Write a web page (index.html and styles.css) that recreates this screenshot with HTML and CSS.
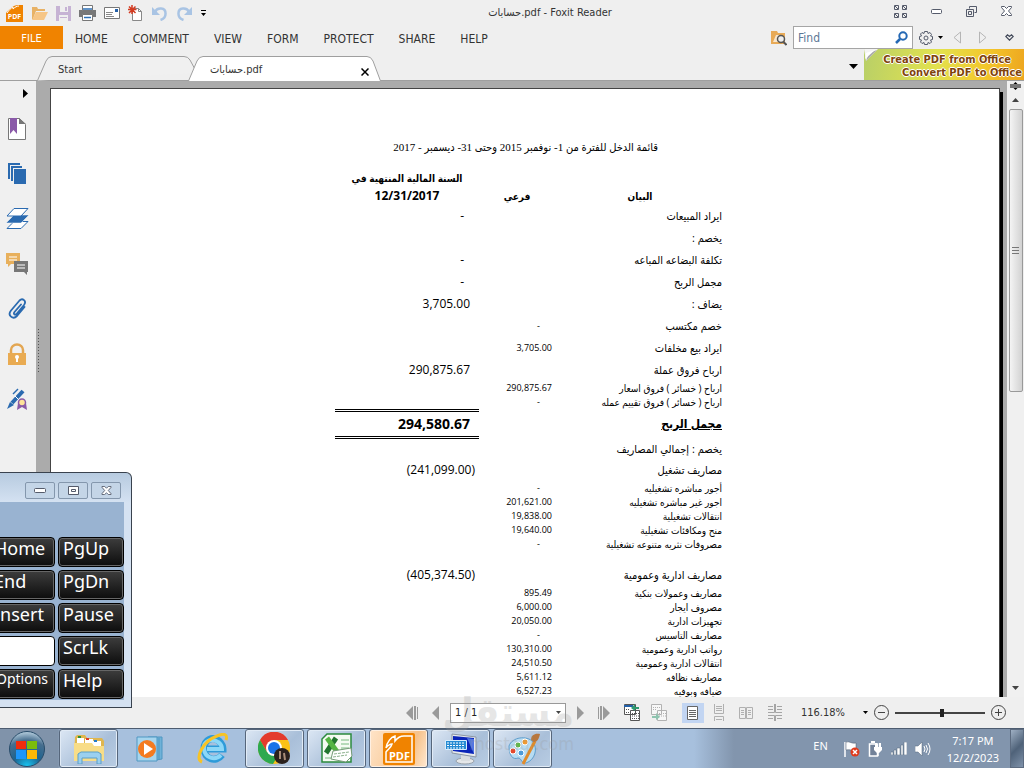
FILE: index.html
```html
<!DOCTYPE html>
<html lang="en">
<head>
<meta charset="utf-8">
<title>حسابات.pdf - Foxit Reader</title>
<link rel="stylesheet" href="styles.css">
</head>
<body>
<svg class="defs" aria-hidden="true">
  <defs>
    <symbol id="foxit" viewBox="0 0 32 32">
      <path fill="#f08300" d="M2 0H30a2 2 0 0 1 2 2V30a2 2 0 0 1-2 2H2a2 2 0 0 1-2-2V2a2 2 0 0 1 2-2z"/>
      <path fill="none" stroke="#fff" stroke-width="1.500" d="M3 15C4 9 8 4 12 3V8C15 4 18 3 21 3H29V29H3V19C5 16 8 15 9 11C7 11 4 13 3 15"/>
      <text x="16.500" y="27" text-anchor="middle" font-size="11" font-weight="700" fill="#fff">PDF</text>
    </symbol>
    <symbol id="diag" viewBox="0 0 5 5">
      <path fill="none" stroke="#555b6b" d="M.5.5h4v4h-4zM1 1l3 3"/>
    </symbol>
  </defs>
</svg>

<header class="titlebar">
  <div class="quick">
    <svg width="17" height="17" viewBox="0 0 17 17"><path fill="#f08300" d="M5 3C7 1 10 0 12 0H17V17H0V8C1 6 3 5 5 3z"/><path stroke="#fff" fill="none" d="M1 8C3 5 5 3 7 2V4C9 2 11 1 13 1"/><text x="8.5" y="14" text-anchor="middle" font-size="7" font-weight="700" fill="#fff">PDF</text></svg>
    <svg width="17" height="16" viewBox="0 0 17 16"><path fill="#e8b266" d="M1 14V2h5l1 2h7v2H5L2 14z"/><path fill="#f6c687" d="M5 7h12l-4 8H1z"/></svg>
    <svg width="15" height="15" viewBox="0 0 15 15"><path fill="#c6b3d4" d="M0 0h15v15H0z"/><path fill="#efefef" d="M4 0h8v6H4zM3 9h9v6H3z"/><path fill="#c6b3d4" d="M9 1h2v4H9zM4 11h7v1H4z"/></svg>
    <svg width="17" height="16" viewBox="0 0 17 16"><path fill="#777" d="M0 5h17v7H0z"/><path fill="#fff" stroke="#777" d="M3.5.5h10v5h-10zM3.500 9.500h10v6h-10z"/><path stroke="#2c6fb5" stroke-width="1.500" d="M4 4h9M5 12.500h7"/></svg>
    <svg width="16" height="12" viewBox="0 0 16 12"><path fill="#fff" stroke="#777" d="M.5.5h15v11H.5z"/><path stroke="#888" d="M2 5.500h7M2 7.500h6M2 9.500h8"/><path fill="#2460a8" d="M11 2h3v3h-3z"/></svg>
    <svg width="15" height="16" viewBox="0 0 15 16"><path fill="#fff" stroke="#888" d="M4.500 3.500h6l3 3v9h-9z"/><path fill="none" stroke="#888" d="M10.500 3.500v3h3"/><path stroke="#d33a20" stroke-width="1.500" d="M4 0v9M0 4.500h8.500M1 1.500l6.500 6.500M7.500 1.500L1 8"/></svg>
    <svg width="17" height="15" viewBox="0 0 17 15"><path fill="none" stroke="#a9c4e4" stroke-width="2.500" d="M4 6C6 1 15 1 14.500 8c0 3-2 5-5 6"/><path fill="#a9c4e4" d="M1 1v8h8z"/></svg>
    <svg width="17" height="15" viewBox="0 0 17 15"><path fill="none" stroke="#a9c4e4" stroke-width="2.500" d="M13 6C11 1 2 1 2.500 8c0 3 2 5 5 6"/><path fill="#a9c4e4" d="M16 1v8H8z"/></svg>
    <svg width="5" height="7" viewBox="0 0 5 7"><path d="M0 0h5v1H0zM0 3h5L2.500 6z"/></svg>
  </div>
  <h1 class="title">حسابات.pdf - Foxit Reader</h1>
  <div class="winbtns">
    <button aria-label="Full screen"><svg width="13" height="13" viewBox="0 0 13 13"><use href="#diag" width="5" height="5"/><use href="#diag" x="8" width="5" height="5"/><use href="#diag" y="8" width="5" height="5"/><use href="#diag" x="8" y="8" width="5" height="5"/></svg></button>
    <button aria-label="Minimize"><svg width="11" height="5" viewBox="0 0 11 5"><rect x=".5" y=".5" width="10" height="4" rx="1" fill="#fff" stroke="#555b6b"/></svg></button>
    <button aria-label="Restore"><svg width="11" height="11" viewBox="0 0 11 11"><path fill="none" stroke="#555b6b" d="M3.500 2.500v-2h7v6h-2M.5 3.500h7v7h-7zM2.500 5.500h3v3h-3z"/></svg></button>
    <button aria-label="Close"><svg width="11" height="10" viewBox="0 0 11 10"><path fill="#fff" stroke="#555b6b" d="M.5.5h3l2 2 2-2h3v1L7.500 5l3 3.500v1h-3l-2-2-2 2h-3v-1l3-3.500-3-3.500z"/></svg></button>
  </div>
</header>

<div class="menurow">
  <nav class="menu">
    <a href="#" class="file">FILE</a>
    <a href="#">HOME</a><a href="#">COMMENT</a><a href="#">VIEW</a><a href="#">FORM</a><a href="#">PROTECT</a><a href="#">SHARE</a><a href="#">HELP</a>
  </nav>
  <div class="tools">
    <svg width="16" height="16" viewBox="0 0 16 16"><path fill="#e8aa57" d="M0 1h6l1 2h7v11H0z"/><path fill="#fff" opacity=".7" d="M2 12l3-7h4v7z"/><circle cx="10" cy="9" r="3.500" fill="#eee" stroke="#555" stroke-width="1.500"/><path stroke="#555" stroke-width="2" d="M12.500 12l3 3"/></svg>
    <label class="find"><input type="text" placeholder="Find" aria-label="Find"><svg width="13" height="13" viewBox="0 0 13 13"><circle cx="8" cy="5" r="3.700" fill="none" stroke="#2468b4" stroke-width="2"/><path stroke="#2468b4" stroke-width="2.500" d="M5 8l-4 4"/></svg></label>
    <button class="gear" aria-label="Settings"><svg width="14" height="14" viewBox="0 0 14 14"><path fill="none" stroke="#555b6b" d="M5.500.500h3l.5 2 2-1 1.500 2-1 1.500 2 .5v3l-2 .5 1 2-1.500 1.500-2-1-.5 2h-3l-.5-2-2 1L1.500 11l1-2-2-.5v-3l2-.5-1-2L3 1.500l2 1z"/><circle cx="7" cy="7" r="2" fill="none" stroke="#555b6b"/></svg><svg width="5" height="3" viewBox="0 0 5 3"><path d="M0 0h5L2.500 3z"/></svg></button>
    <button aria-label="Previous"><svg width="8" height="13" viewBox="0 0 8 13"><path fill="none" stroke="#b5b5b5" d="M7.500 1v11L1 6.500z"/></svg></button>
    <button aria-label="Next"><svg width="8" height="13" viewBox="0 0 8 13"><path fill="none" stroke="#b5b5b5" d="M.5 1v11L7 6.500z"/></svg></button>
    <button aria-label="Favorites"><svg width="9" height="7" viewBox="0 0 9 7"><path fill="none" stroke="#444b5b" stroke-width="1.200" d="M4.500 2.500L2.500.8.8 2.500l3.700 3.700 3.700-3.700L6.500.8z"/></svg></button>
  </div>
</div>

<div class="tabrow">
  <a href="#" class="tab start"><svg class="shape" width="160" height="25" viewBox="0 0 160 25"><path fill="#f0f0f0" stroke="#9f9f9f" d="M.5 24.500L9 5Q11 .5 15 .5H147Q151 .5 153 4L160 17"/></svg><span>Start</span></a>
  <a href="#" class="tab active"><svg class="shape" width="193" height="25" viewBox="0 0 193 25"><path fill="#fff" stroke="#9f9f9f" d="M.5 25L9 5Q11 .5 15 .5H179Q183 .5 185 5L192.500 25"/></svg><span>حسابات.pdf</span><svg class="x" width="8" height="8" viewBox="0 0 8 8"><path stroke="#000" stroke-width="1.500" d="M.5.5l7 7M7.500.5l-7 7"/></svg></a>
  <button class="tablist" aria-label="Tab list"><svg width="9" height="5" viewBox="0 0 9 5"><path d="M0 0h9L4.500 5z"/></svg></button>
  <a href="#" class="promo"><svg class="curl" width="14" height="13" viewBox="0 0 14 13"><path fill="#f4f4f4" d="M0 0h14L2 12z"/><path fill="#aaa" d="M13 1L2 12l3-8z"/><path fill="#fff" d="M11 1L1 10l1-6z"/></svg><span>Create PDF from Office</span><span class="second">Convert PDF to Office</span></a>
</div>

<main class="work">
  <aside class="side">
    <button aria-label="Expand"><svg width="5" height="9" viewBox="0 0 5 9"><path d="M0 0l5 4.500L0 9z"/></svg></button>
    <button aria-label="Bookmarks"><svg width="18" height="22" viewBox="0 0 18 22"><path fill="#fff" stroke="#777" d="M.5.500h11l6 6v15H.5z"/><path fill="#777" d="M11 0l7 6h-7z"/><path fill="#8a5aa8" d="M2 0h7v16l-3.500-4L2 16z"/></svg></button>
    <button aria-label="Pages"><svg width="18" height="21" viewBox="0 0 18 21"><path fill="none" stroke="#2a6ab0" stroke-width="2" d="M1 16V1h11M4 18V4h10"/><path fill="#2a6ab0" d="M6 6h12v15H6z"/></svg></button>
    <button aria-label="Layers"><svg width="23" height="21" viewBox="0 0 23 21"><path fill="#fff" stroke="#2a6ab0" d="M1 20.500l7-7h14l-7 7z"/><path fill="#2a6ab0" stroke="#fff" stroke-width=".5" d="M0 15l8-8h15l-8 8z"/><path fill="#fff" stroke="#2a6ab0" d="M1 8l7-7.500h14L15 8z"/></svg></button>
    <button aria-label="Comments"><svg width="22" height="22" viewBox="0 0 22 22"><path fill="#e8b05c" d="M0 0h14v11H5l-3 3v-3H0z"/><path fill="#777" d="M8 8h14v11h-1v3l-3-3H8z"/><path fill="none" stroke="#fff" stroke-width="1.200" d="M3 4h8M3 7h8M11 12h8M11 15h8"/></svg></button>
    <button aria-label="Attachments"><svg width="19" height="21" viewBox="0 0 19 21"><path fill="none" stroke="#2a6ab0" stroke-width="1.800" stroke-linecap="round" d="M13 6.500L6.500 14c-1.500 2 .5 3.500 2 2l7.500-9c3-4-1.500-7.500-4.500-4.500L3 12.500c-4 5 2 9.500 6 5.500l7.500-9"/></svg></button>
    <button aria-label="Security"><svg width="18" height="22" viewBox="0 0 18 22"><path fill="none" stroke="#e3a652" stroke-width="2.500" d="M3 11V7a6 5.500 0 0 1 12 0v4"/><path fill="#e9ab52" d="M0 10h18v12H0z"/><circle cx="9" cy="14" r="2" fill="#fff"/><path fill="#fff" d="M8 14h2v5H8z"/></svg></button>
    <button aria-label="Signatures"><svg width="20" height="22" viewBox="0 0 20 22"><path stroke="#2a6ab0" stroke-width="4" d="M16 3L5 15"/><path fill="#2a6ab0" d="M3 14l4 3-7 4z"/><path stroke="#fff" d="M8 8l4 4"/><path stroke="#2a6ab0" stroke-width="1.500" d="M6 6l5-5"/><path fill="#8a5aa8" d="M11 15h8l1 7-5-3-5 3z"/><circle cx="15" cy="14.500" r="3.500" fill="#ffe39a" stroke="#8a5aa8" stroke-width="1.500"/></svg></button>
  </aside>
  <div class="grip"></div>
  <section class="viewer">
    <article class="paper" dir="rtl">
      <h2>قائمة الدخل للفترة من 1- نوفمبر 2015 وحتى 31- ديسمبر - 2017</h2>
      <table>
        <colgroup><col class="c-label"><col class="c-sub"><col class="c-main"></colgroup>
        <thead><tr><th scope="col">البيان</th><th scope="col">فرعي</th><th scope="col">السنة المالية المنتهية في<br><span class="date">12/31/2017</span></th></tr></thead>
        <tbody>
          <tr><td>ايراد المبيعات</td><td></td><td class="dash">-</td></tr>
          <tr><td>يخصم :</td><td></td><td></td></tr>
          <tr><td>تكلفة البضاعه المباعه</td><td></td><td class="dash">-</td></tr>
          <tr><td>مجمل الربح</td><td></td><td class="dash">-</td></tr>
          <tr><td>يضاف :</td><td></td><td>3,705.00</td></tr>
          <tr><td>خصم مكتسب</td><td class="dash">-</td><td></td></tr>
          <tr><td>ايراد بيع مخلفات</td><td>3,705.00</td><td></td></tr>
          <tr><td>ارباح فروق عملة</td><td></td><td>290,875.67</td></tr>
          <tr class="s"><td>ارباح ( خسائر ) فروق اسعار</td><td>290,875.67</td><td></td></tr>
          <tr class="s"><td>ارباح ( خسائر ) فروق تقييم عمله</td><td class="dash">-</td><td></td></tr>
          <tr class="total"><td><u>مجمل الربح</u></td><td></td><td>294,580.67</td></tr>
          <tr class="after"><td>يخصم : إجمالي المصاريف</td><td></td><td></td></tr>
          <tr><td>مصاريف تشغيل</td><td></td><td class="neg"><bdi dir="ltr">(241,099.00)</bdi></td></tr>
          <tr class="s"><td>أجور مباشره تشغيليه</td><td class="dash">-</td><td></td></tr>
          <tr class="s"><td>اجور غير مباشره تشغيليه</td><td>201,621.00</td><td></td></tr>
          <tr class="s"><td>انتقالات تشغيلية</td><td>19,838.00</td><td></td></tr>
          <tr class="s"><td>منح ومكافئات تشغيلية</td><td>19,640.00</td><td></td></tr>
          <tr class="s"><td>مصروفات نثريه متنوعه تشغيلية</td><td class="dash">-</td><td></td></tr>
          <tr class="gap"><td></td><td></td><td></td></tr>
          <tr><td>مصاريف ادارية وعمومية</td><td></td><td class="neg"><bdi dir="ltr">(405,374.50)</bdi></td></tr>
          <tr class="s"><td>مصاريف وعمولات بنكية</td><td>895.49</td><td></td></tr>
          <tr class="s"><td>مصروف ايجار</td><td>6,000.00</td><td></td></tr>
          <tr class="s"><td>تجهيزات ادارية</td><td>20,050.00</td><td></td></tr>
          <tr class="s"><td>مصاريف التاسيس</td><td class="dash">-</td><td></td></tr>
          <tr class="s"><td>رواتب ادارية وعمومية</td><td>130,310.00</td><td></td></tr>
          <tr class="s"><td>انتقالات ادارية وعمومية</td><td>24,510.50</td><td></td></tr>
          <tr class="s"><td>مصاريف نظافه</td><td>5,611.12</td><td></td></tr>
          <tr class="s"><td>ضيافه وبوفيه</td><td>6,527.23</td><td></td></tr>
        </tbody>
      </table>
    </article>
  </section>
  <div class="scroll">
    <svg width="11" height="8" viewBox="0 0 11 8"><path d="M0 2.500h11v1H0zM0 4.500h11v1H0zM5.500 0l2 2h-4zM5.500 8l2-2h-4z"/></svg>
    <svg class="up" width="7" height="4" viewBox="0 0 7 4"><path fill="#444" d="M0 4h7L3.500 0z"/></svg>
    <div class="thumb"></div>
    <svg class="down" width="7" height="4" viewBox="0 0 7 4"><path fill="#444" d="M0 0h7L3.500 4z"/></svg>
  </div>
</main>

<section class="keyboard" aria-label="On-Screen Keyboard">
  <div class="kbtitle">
    <button aria-label="Minimize keyboard"><svg width="12" height="5" viewBox="0 0 12 5"><rect x=".5" y=".5" width="11" height="4" rx="1" fill="#fff" stroke="#555b6b"/></svg></button>
    <button aria-label="Maximize keyboard"><svg width="11" height="9" viewBox="0 0 11 9"><path fill="#fff" stroke="#555b6b" d="M.5.500h10v8H.5zM3.500 3.500h4v2h-4z"/></svg></button>
    <button aria-label="Close keyboard"><svg width="11" height="9" viewBox="0 0 11 10"><path fill="#fff" stroke="#555b6b" d="M.5.5h3l2 2 2-2h3v1L7.500 5l3 3.500v1h-3l-2-2-2 2h-3v-1l3-3.500-3-3.500z"/></svg></button>
  </div>
  <div class="keys">
    <button>Home</button><button>PgUp</button>
    <button>End</button><button>PgDn</button>
    <button>Insert</button><button>Pause</button>
    <button class="blank" aria-label="Blank key"></button><button>ScrLk</button>
    <button class="opt">Options</button><button>Help</button>
  </div>
</section>

<footer class="status">
  <div class="pager">
    <button aria-label="First page"><svg width="13" height="14" viewBox="0 0 13 14"><path fill="#9a9a9a" d="M7 0v14L0 7zM8 0h2v14H8zM11 1h1v12h-1z"/></svg></button>
    <button aria-label="Previous page"><svg width="7" height="14" viewBox="0 0 7 14"><path fill="#9a9a9a" d="M7 0v14L0 7z"/></svg></button>
    <label class="page"><select aria-label="Page"><option>1 / 1</option></select><svg width="5" height="3" viewBox="0 0 5 3"><path fill="#444" d="M0 0h5L2.500 3z"/></svg></label>
    <button aria-label="Next page"><svg width="7" height="14" viewBox="0 0 7 14"><path fill="#9a9a9a" d="M0 0v14l7-7z"/></svg></button>
    <button aria-label="Last page"><svg width="13" height="14" viewBox="0 0 13 14"><path fill="#9a9a9a" d="M6 0v14l7-7zM3 0h2v14H3zM1 1h1v12H1z"/></svg></button>
  </div>
  <div class="modes">
    <svg width="16" height="17" viewBox="0 0 16 17"><path fill="#fff" stroke="#555" d="M.5.500h11v10H.5zM6.500 6.500h9v10h-9z"/><path stroke="#2460a8" stroke-width="2" d="M0 2h9"/><path stroke="#555" stroke-dasharray="1 1" d="M2 5.500h4M2 8.500h4M8 9.500h7M8 12h7M8 14.500h7"/><path fill="#2f9a70" d="M15 3h-4V0L7 4l4 3V5h4z"/></svg>
    <svg width="16" height="17" viewBox="0 0 16 17" opacity=".5"><path fill="#fff" stroke="#777" d="M.5.500h10v10H.5zM6.500 6.500h9v10h-9z"/><path stroke="#777" stroke-dasharray="1 1" d="M2 3.500h8M2 5.500h4M8 9.500h7M8 12h7"/><path fill="#2f9a70" d="M1 12h4v-3l4 4-4 3v-2H1z"/></svg>
    <button class="sel" aria-label="Single page"><svg width="11" height="14" viewBox="0 0 11 14"><path fill="#fff" stroke="#666" d="M.5.500h10v13H.5zM2 4.500h7M2 6.500h7M2 8.500h7M2 10.500h7"/></svg></button>
    <button aria-label="Continuous"><svg width="10" height="17" viewBox="0 0 10 17"><path fill="none" stroke="#b0b0b0" d="M.5 0v9.500h9V0M2 2.500h6M2 4.500h6M2 6.500h6M.5 17v-4.500h9V17M2 15.500h6"/></svg></button>
    <button aria-label="Facing"><svg width="14" height="12" viewBox="0 0 14 12"><path fill="none" stroke="#b0b0b0" d="M.5.500h6v11h-6zM7.500.5h6v11h-6zM2 3.500h3M2 5.500h3M2 7.500h3M9 3.500h3M9 5.500h3M9 7.500h3"/></svg></button>
    <button aria-label="Continuous facing"><svg width="14" height="17" viewBox="0 0 14 17"><path fill="none" stroke="#a5a5a5" d="M0 8.500h6.500V0M14 8.500H7.500V0M0 11.500h6.500V17M14 11.500H7.500V17M0 2.500h5M0 5.500h5M9 2.500h5M9 5.500h5M0 14.500h5M9 14.500h5"/></svg></button>
  </div>
  <div class="zoom">
    <span>116.18%</span>
    <svg class="zarrow" width="5" height="3" viewBox="0 0 5 3"><path d="M0 0h5L2.500 3z"/></svg>
    <button aria-label="Zoom out"><svg width="15" height="15" viewBox="0 0 15 15"><circle cx="7.500" cy="7.500" r="7" fill="none" stroke="#444"/><path stroke="#444" d="M4 7.500h7"/></svg></button>
    <input type="range" min="0" max="100" value="52" aria-label="Zoom">
    <button aria-label="Zoom in"><svg width="15" height="15" viewBox="0 0 15 15"><circle cx="7.500" cy="7.500" r="7" fill="none" stroke="#444"/><path stroke="#444" d="M4 7.500h7M7.500 4v7"/></svg></button>
  </div>
</footer>

<footer class="taskbar">
  <button class="orb" aria-label="Start menu"><svg width="36" height="36" viewBox="0 0 36 36"><defs><radialGradient id="orb" cx=".5" cy="1" r="1"><stop offset="0" stop-color="#16c8f6"/><stop offset=".4" stop-color="#1d6390"/><stop offset=".75" stop-color="#476e8e"/><stop offset="1" stop-color="#b8d0e0"/></radialGradient></defs><circle cx="18" cy="18" r="17.500" fill="url(#orb)" stroke="#284c6a"/><path fill="#f02d0d" d="M7 10h10v8H7z"/><path fill="#7bbc0b" d="M18 10h10v8H18z"/><path fill="#1e96fa" d="M7 19h10v9H7z"/><path fill="#fdb806" d="M18 19h10v9H18z"/></svg></button>
  <button class="app" aria-label="Explorer"><svg width="32" height="30" viewBox="0 0 32 30"><path fill="#dfb64f" d="M2 3l2-2h8l2 3h15l2 3v18H1z"/><path fill="#fff" d="M4 4h7v5H4zM12 5h8v6h-8zM20 7h8v5h-8z"/><path stroke="#2f8f36" stroke-width="2" d="M5 3h3"/><path stroke="#de3b26" stroke-width="2" d="M13 5h3"/><path stroke="#247bc9" stroke-width="2" d="M21 7h3"/><path fill="#f8dd87" d="M1 9h18l2 3h10v15H1z"/><path fill="#9bd0ef" stroke="#5a9fc8" d="M5 30V20l3-2h17l3 2v10h-4v-6H9v6z"/></svg></button>
  <button class="app plain" aria-label="Media Player"><svg width="30" height="26" viewBox="0 0 30 26"><path fill="#6fb2d8" stroke="#4f97c2" d="M12 1h14v22l-6 1z"/><path fill="#a6d5ee" stroke="#4f97c2" d="M1 1h20v24H1zM23 2v22"/><circle cx="11" cy="13" r="9" fill="#f47b20"/><path fill="#fff" d="M8 7l9 6-9 6z"/></svg></button>
  <button class="app plain" aria-label="Internet Explorer"><svg width="32" height="32" viewBox="0 0 32 32"><path fill="none" stroke="#2e9bd9" stroke-width="7" d="M25 22C19 30 7 26 7 16S16 3 22 8C25 11 26 13 26 16H9"/><path fill="none" stroke="#8cd7f7" stroke-width="4" d="M24 22C18 28 8 25 7 16S16 5 21 9C24 11 25 13 25 16H10"/><path fill="none" stroke="#f7c325" stroke-width="3" d="M5 29C-3 26 6 8 20 3c7-3 11-2 9 4"/></svg></button>
  <button class="app" aria-label="Chrome"><svg width="34" height="34" viewBox="0 0 34 34"><circle cx="16" cy="16" r="16" fill="#fbc116"/><path fill="#e33b2e" d="M2 8A16 16 0 0 1 30 8H16L9 20z"/><path fill="#2da94f" d="M2 8a16 16 0 0 0 13 24l7-12H9z"/><circle cx="16" cy="16" r="8" fill="#fff"/><circle cx="16" cy="16" r="6" fill="#1a73e8"/><circle cx="24" cy="24" r="8" fill="#2a211d"/><path stroke="#a98d78" stroke-width="2" d="M22 19v8M26 21l1 7"/></svg></button>
  <button class="app" aria-label="Excel"><svg width="32" height="32" viewBox="0 0 32 32"><path fill="#f5fbf3" stroke="#2b8a3e" stroke-width="1.500" d="M6 1h24v28H1V6z"/><path stroke="#79b980" d="M20 7h8M20 11h8M20 15h8M4 25h15"/><path stroke="#22762f" stroke-width="5" d="M15 5L5 20"/><path stroke="#55b544" stroke-width="5" d="M6 5l11 15"/><path fill="#fff" stroke="#769a78" d="M12 18l18-3 1 8-6 6-15-3z"/><path stroke="#8ab08b" stroke-dasharray="3 1" d="M13 21l15-2M12 24l14-2"/></svg></button>
  <button class="app active" aria-label="Foxit Reader"><svg width="32" height="32"><use href="#foxit"/></svg></button>
  <button class="app" aria-label="On-Screen Keyboard"><svg width="32" height="32" viewBox="0 0 32 32"><ellipse cx="20" cy="28" rx="9" ry="3" fill="#e5e7e9" stroke="#9aa2aa"/><path fill="#d9dde0" d="M16 20h9v8h-9z"/><path fill="#e7eaed" stroke="#8a96a4" d="M7 1l24 3v20L7 20z"/><path fill="#0b25b8" d="M8 3l21 2v16L8 18z"/><path fill="#5076e2" d="M22 5l7 1v15z"/><path fill="#258bd3" stroke="#d9efff" d="M.5 7.500h21v9H.5z"/><path stroke="#fff" stroke-dasharray="2 1" d="M2 10h18M2 12.500h18M2 15h18"/></svg></button>
  <button class="app" aria-label="Paint"><svg width="34" height="32" viewBox="0 0 34 32"><path fill="#b7dcf2" stroke="#5d9dcc" d="M3 13C6 4 21 2 27 9c5 7 2 18-7 21-5 1-4-5-8-5-5 2-9-2-9-12z"/><g stroke="#fff"><circle cx="7" cy="18" r="3" fill="#e3482d"/><circle cx="12" cy="12" r="3" fill="#5cb947"/><circle cx="19" cy="9" r="3" fill="#ef9a2d"/><circle cx="15" cy="20" r="3" fill="#4c9bd8"/></g><path stroke="#e18b2a" stroke-width="3" d="M17 31L29 8"/><path fill="#b8773f" d="M25 7C25 2 29 0 34 1c-1 5-3 8-6 8z"/></svg></button>
  <div class="tray">
    <span class="lang">EN</span>
    <svg width="16" height="16" viewBox="0 0 16 16"><path fill="none" stroke="#fff" stroke-width="1.500" d="M1 1v15"/><path fill="#fff" stroke="#48566a" stroke-width=".5" d="M2 1c4-1 5 2 10 1v7c-4 1-6-1-10 0z"/><circle cx="11" cy="11" r="4.500" fill="#df3b1d"/><path stroke="#fff" stroke-width="1.500" d="M9 9l4 4M13 9l-4 4"/></svg>
    <svg width="15" height="16" viewBox="0 0 15 16"><path fill="#728299" stroke="#fff" stroke-width="1.500" d="M1.500 3h8v12h-8z"/><path fill="#fff" d="M3 0h4v2H3zM6 6h8v3l-3 3H9L6 9zM7 2h2v4H7zM11 2h2v4h-2z"/><path stroke="#fff" stroke-width="1.500" d="M10 11v4"/></svg>
    <svg width="16" height="13" viewBox="0 0 16 13"><path fill="#fff" stroke="#53647a" stroke-width=".5" d="M0 10h2v3H0zM3 8h2v5H3zM6 6h3v7H6zM10 3h2v10h-2zM13 0h3v13h-3z"/></svg>
    <svg width="16" height="14" viewBox="0 0 16 14"><path fill="#fff" stroke="#53647a" stroke-width=".5" d="M0 4h3l4-4v14l-4-4H0z"/><path fill="none" stroke="#fff" d="M9 4q2 3 0 6M11 3q3 4 0 8M13 1q4 6 0 12"/></svg>
    <time datetime="2023-12-02T19:17">7:17 PM<br>12/2/2023</time>
  </div>
  <button class="desk" aria-label="Show desktop"></button>
</footer>
<div class="mark"><b lang="ar">مستقل</b><span>mostaql.com</span></div>
</body>
</html>
```
FILE: styles.css
```css
* { box-sizing: border-box; }
body {
  margin: 0;
  height: 100vh;
  display: flex;
  flex-direction: column;
  overflow: hidden;
  position: relative;
  background: #efefef;
  color: #333;
  font: 11px/14px "DejaVu Sans Condensed", "DejaVu Sans", sans-serif;
}
.defs { position: absolute; width: 0; height: 0; }
svg { display: block; flex: none; }
button { margin: 0; padding: 0; border: 0; background: none; font: inherit; color: inherit; display: flex; align-items: center; justify-content: center; flex: none; }
a { color: inherit; text-decoration: none; }

.titlebar { display: flex; align-items: center; height: 26px; flex: none; }
.quick { display: flex; align-items: center; gap: 8px; padding-left: 6px; }
.title { flex: 1; margin: 0; text-align: center; font-size: 11px; font-weight: 400; }
.winbtns { display: flex; align-items: center; gap: 24px; padding-right: 12px; padding-bottom: 4px; }

.menurow { display: flex; align-items: center; justify-content: space-between; height: 23px; flex: none; }
.menu { display: flex; align-items: center; gap: 25px; font-size: 12px; line-height: 23px; }
.menu a { padding-top: 3px; line-height: 20px; }
.menu .file { width: 63px; margin-right: -13px; text-align: center; background: #f08300; color: #fff; font-size: 11px; }
.tools { display: flex; align-items: center; gap: 18px; padding-right: 10px; }
.tools > svg { margin-right: -12px; }
.find { display: flex; align-items: center; width: 120px; height: 23px; padding: 0 4px; background: #fff; border: 1px solid #a5a5a5; }
.find input { flex: 1; min-width: 0; padding: 0; border: 0; outline: 0; background: none; font: inherit; font-size: 12px; }
.find input::placeholder { color: #5c7896; opacity: 1; }
.gear { gap: 5px; margin: 0 -8px 0 -12px; }

.tabrow { display: flex; align-items: flex-end; height: 32px; flex: none; border-bottom: 1px solid #9f9f9f; }
.tab { position: relative; display: flex; align-items: center; height: 25px; margin-bottom: -1px; padding-top: 2px; }
.tab span, .tab .x { position: relative; }
.shape { position: absolute; left: 0; top: 0; }
.start { width: 151px; margin-left: 37px; padding-left: 21px; }
.tab.active { width: 193px; padding: 2px 12px 0 22px; justify-content: space-between; }
.tab .x { margin-top: 4px; }
.tablist { margin: 0 6px 11px auto; }
.promo { position: relative; width: 160px; height: 31px; display: flex; flex-direction: column; align-items: flex-end; padding: 4px 2px 0 0; font-weight: 700; line-height: 13px; color: #80430b; white-space: nowrap; text-shadow: 1px 0 #fff, -1px 0 #fff, 0 1px #fff, 0 -1px #fff; background: linear-gradient(100deg, #b8cf68, #e2e24e 45%, #f3c72c 75%, #eda51f); }
.promo span:not(.second) { margin-right: 11px; }
.curl { position: absolute; left: 0; top: 0; }

.work { display: flex; flex: 1; min-height: 0; background: #ababab; }
.side { width: 36px; flex: none; display: flex; flex-direction: column; align-items: center; gap: 24px; padding-top: 8px; background: #f0f0f0; }
.side button { height: 21px; }
.side button:first-child { height: 9px; margin: 0 0 -4px 14px; }
.side button + button { margin-right: 2px; }
.grip { width: 4px; height: 44px; margin: 247px 0 0 1px; flex: none; background: radial-gradient(circle, #555 0 1px, transparent 1px) 0 0 / 3px 3px; }
.viewer { flex: 1; min-width: 0; display: flex; padding: 7px 7px 0 9px; overflow: hidden; }
.paper { flex: 1; margin-bottom: -8px; overflow: hidden; background: #fff; border: 1px solid #444; box-shadow: 3px 4px #000; color: #000; }
.paper h2 { margin: 50px 341px 0 0; font: 11px/16px "Liberation Serif", "DejaVu Sans Condensed", serif; }
.paper table { width: 390px; margin: 14px 274px 0 0; border-collapse: separate; border-spacing: 0; table-layout: fixed; }
.c-label { width: 170px; }
.c-sub { width: 76px; }
.c-main { width: 144px; }
.paper th { padding: 0; height: 36px; font: 700 10px/18px "Open Sans", "DejaVu Sans Condensed", sans-serif; vertical-align: bottom; white-space: nowrap; }
.date { font-size: 12px; }
.paper td { padding: 0 3px 0 0; height: 22px; text-align: right; white-space: nowrap; font: 11px/14px "Open Sans", "DejaVu Sans Condensed", sans-serif; vertical-align: middle; }
.paper td:nth-child(2) { font-size: 9px; font-weight: 500; }
.paper td:nth-child(3) { padding-right: 9px; font-size: 12px; }
.paper td.dash, .paper td.dash:nth-child(3) { padding-right: 15px; }
.paper td.neg:nth-child(3) { padding-right: 4px; }
.paper .s td { height: 14px; line-height: 12px; }
.paper .s td:first-child { font-size: 10px; }
.paper .gap td { height: 13px; }
.paper .total td { height: 30px; font-size: 12px; font-weight: 700; }
.paper .total td:nth-child(3) { font-size: 14px; border: solid #000; border-width: 3px 0; border-style: double; }
.paper .after td { height: 20px; }
.scroll { width: 17px; flex: none; display: flex; flex-direction: column; align-items: center; padding-top: 1px; background: #f0f0f0; }
.up { margin: 8px 0 7px; }
.thumb { width: 14px; height: 46%; border: 1px solid #999; border-radius: 2px; background: linear-gradient(#777 0 0) center / 7px 1px no-repeat, linear-gradient(#777 0 0) center calc(50% + 3px) / 7px 1px no-repeat, linear-gradient(#777 0 0) center calc(50% - 3px) / 7px 1px no-repeat, linear-gradient(90deg, #f4f4f4, #d2d2d2); }
.down { margin: auto 0 7px; }

.keyboard { position: absolute; left: 0; bottom: 60px; width: 132px; height: 236px; border: 1px solid #39424e; border-left: 0; border-radius: 0 6px 0 0; background: linear-gradient(#b7cbe0, #d5e2f2 30px); overflow: hidden; padding: 0 7px 7px 0; }
.kbtitle { display: flex; justify-content: flex-end; gap: 3px; height: 29px; padding: 9px 3px 3px 0; }
.kbtitle button { width: 30px; border: 1px solid #8497ad; border-radius: 2px; background: #c4d5e7; }
.keys { display: grid; grid-template-columns: 66px 66px; gap: 3px; height: 198px; justify-content: end; align-content: end; padding: 0 0 1px; background: #99b3d1; }
.keys button { height: 30px; justify-content: flex-start; align-items: flex-start; padding: 0 4px; border: 1px solid #000; border-radius: 4px; box-shadow: inset 0 0 0 1px #666; background: linear-gradient(#3d3d3d, #0c0c0c); color: #fff; font: 18px/21px "Noto Sans", sans-serif; }
.keys .blank { background: #fff; box-shadow: none; }
.keys button.opt { padding-left: 6px; font-size: 14px; line-height: 18px; }

.status { display: flex; align-items: center; height: 31px; flex: none; padding: 0 18px 0 406px; justify-content: space-between; }
.pager, .modes, .zoom { display: flex; align-items: center; }
.pager { gap: 13px; }
.page { display: flex; align-items: center; width: 116px; height: 20px; margin: 0 -2px; padding: 0 4px; border: 1px solid #999; background: #fff; }
.page select { flex: 1; appearance: none; border: 0; padding: 0; background: none; font: inherit; font-size: 11px; color: #222; }
.modes { gap: 15px; margin-right: 5px; }
.modes > svg + svg { margin-left: -4px; }
.modes .sel { width: 22px; height: 20px; background: #c2d5f2; }
.modes > svg + button { margin-right: -5px; }
.zoom { gap: 6px; }
.zarrow { margin-left: 12px; }
.zoom input { appearance: none; width: 90px; height: 16px; margin: 0; background: linear-gradient(#444 0 0) center / 100% 2px no-repeat; }
.zoom input::-webkit-slider-thumb { appearance: none; width: 4px; height: 8px; background: #222; }

.taskbar { display: flex; align-items: stretch; height: 40px; flex: none; gap: 3px; border-top: 1px solid #4d5c70; background: linear-gradient(90deg, #8093aa 0 58px, #a7c0dd 62px calc(100% - 330px), #8295ad calc(100% - 290px)); }
.orb { width: 56px; padding-right: 3px; }
.app { width: 59px; border: 1px solid #56667b; border-radius: 3px; background: linear-gradient(135deg, #dce7f4, #a9bfd9 60%, #b9cde3); box-shadow: inset 0 0 0 1px #e1ebf6; }
.app.plain { border-color: transparent; background: none; box-shadow: none; }
.app.active { background: linear-gradient(110deg, #ffe4c8, #f6c28b 70%, #ffe9d2); box-shadow: inset 0 0 0 1px #fff0e2; }
.tray { margin-left: auto; display: flex; align-items: center; gap: 8px; color: #fff; font: 11px/17px "Noto Sans", sans-serif; }
.lang { margin: 0 8px 6px 0; }
.tray time { margin-left: 8px; text-align: center; }
.desk { width: 14px; margin-left: 5px; border: 1px solid #5c6b80; background: linear-gradient(135deg, #9fb0c4, #4f6279 50%, #7f92aa); }
.taskbar .tray { padding-right: 3px; }
.mark { position: absolute; left: 450px; bottom: 14px; width: 124px; display: flex; flex-direction: column; align-items: flex-end; color: #999; opacity: .24; pointer-events: none; }
.mark b { font-size: 40px; line-height: 44px; }
.mark span { font-size: 18px; line-height: 20px; }
text { font-family: "Open Sans", sans-serif; }
```
